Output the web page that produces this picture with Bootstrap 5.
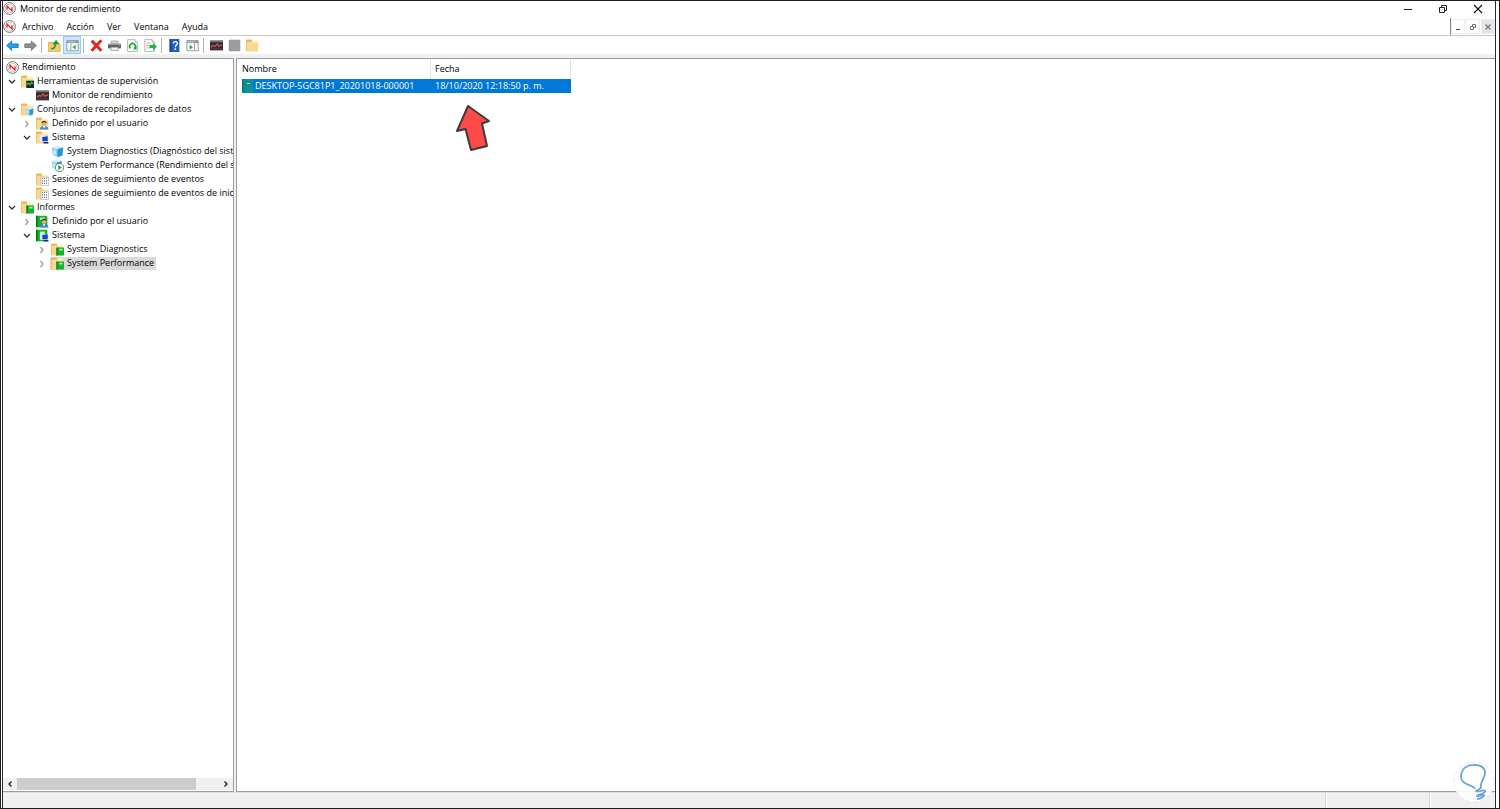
<!DOCTYPE html>
<html lang="es">
<head>
<meta charset="utf-8">
<meta name="viewport" content="width=device-width, initial-scale=1">
<title>Monitor de rendimiento</title>
<link href="https://cdn.jsdelivr.net/npm/bootstrap@5.3.0/dist/css/bootstrap.min.css" rel="stylesheet">
<style>
  body { font: 9px/14px "Open Sans", "Noto Sans", sans-serif; color: #000; background: #fff; }
  a, a:hover { color: inherit; text-decoration: none; }
  button { font: inherit; color: inherit; background: none; border: 0; padding: 0; display: flex; align-items: center; justify-content: center; }
  svg { display: block; flex: none; }
  .window { height: 100vh; min-height: 400px; border: 1px solid #1f1b24; padding: 0 3px 0 1px; }
  .frame { border: solid #2b2730; border-width: 0 1px; }
  .ico { width: 13px; height: 13px; }
  .titlebar { height: 17px; padding-bottom: 2px; }
  .caption-btn { width: 35px; height: 15px; }
  .menubar { height: 18px; border-bottom: 1px solid #c8c8c8; }
  .menubar .menu-link { padding: 0 6px; line-height: 13px; }
  .menubar .menu-link + .menu-link { padding-left: 7px; }
  .mdi { border-left: 1px solid #8c8c8c; gap: 1px; }
  .mdi button { width: 14px; height: 15px; border: 1px solid #ececec; background: #fff; }
  .mdi .shade { background: #e6e6e6; }
  .toolbar { height: 18px; }
  .toolbar button { width: 18px; height: 18px; }
  .toolbar .pressed { background: #cce8ff; border: 1px solid #8fd0f5; }
  .split { width: 6px; height: 18px; padding: 2px 0 1px 2px; }
  .split::before { content: ""; display: block; width: 1px; height: 100%; background: #b4b4b4; }
  .workarea { background: #f0f0f0; padding: 4px 0 0; gap: 2px; }
  .pane { background: #fff; border: 1px solid #9a9da5; }
  .tree-pane { width: 231px; border-left: 0; }
  .tree { padding-top: 1px; }
  .tree ul { list-style: none; margin: 0; padding-left: 15px; }
  .tree > ul { padding-left: 3px; }
  .node { height: 14px; white-space: nowrap; }
  .node .ico { margin-right: 1px; }
  .twist { width: 12px; height: 14px; margin: 0 3px 0 -15px; flex: none; }
  .node a { padding: 0 2px; line-height: 14px; }
  .picked { background: #d9d9d9; height: 13px; margin-left: -1px; padding-left: 1px; }
  .hbar { height: 12px; background: #f0f0f0; margin-bottom: 1px; }
  .hbar button { width: 14px; height: 12px; }
  .thumb { width: 179px; height: 12px; background: #cdcdcd; }
  .list-pane { padding-left: 5px; border-right: 0; }
  .files { width: 329px; table-layout: fixed; border-collapse: separate; border-spacing: 0; }
  .files th { font-weight: 400; height: 20px; padding: 0; border-right: 1px solid #e5e5e5; line-height: 14px; }
  .files th + th, .files td + td { padding-left: 4px; }
  .files td { height: 14px; padding: 0; color: #fff; background: #0078d7; line-height: 14px; }
  .files .c1 { width: 189px; }
  .files a { padding-left: 2px; }
  .statusbar { height: 16px; background: #f0f0f0; border-top: 1px solid #e0e0e0; }
  .statusbar div { border-left: 1px solid #d4d4d4; box-shadow: inset 1px 0 #fff; }
  .part-a { width: 104px; } .part-b { width: 66px; }
  .pointer { position: absolute; left: 217px; top: 45px; }
  .bulb { position: fixed; right: 5px; bottom: 6px; }
</style>
</head>
<body>
<svg class="d-none" aria-hidden="true">
  <symbol id="i-perf" viewBox="0 0 16 16"><circle cx="8" cy="8" r="7.300" fill="#fff" stroke="#66686c" stroke-width="1.100"/><circle cx="8" cy="8" r="5.300" fill="#fff" stroke="#a9a9a9" stroke-width=".8"/><path d="M5 9.500V5l6 6V6.500" fill="none" stroke="#e6231b" stroke-width="1.600"/></symbol>
  <symbol id="i-folder" viewBox="0 0 16 16"><path d="M0 1.500V15h14V3H8L7 .500H1z" fill="#e9b95c"/><path d="M1 3.500H14.500V14.500H1z" fill="#fbdd97"/><path d="M8 1.500h6v3H8z" fill="#fff3cf"/><path d="M1 5.500h14V15H1z" fill="#fad98f"/></symbol>
  <symbol id="i-graph" viewBox="0 0 16 16"><path d="M0 2h16v12H0z" fill="#2b3038"/><path d="M0 2h16v2H0z" fill="#68717c"/><path d="M1 10l3-2 2 1 3-3 2 3 4-2" fill="none" stroke="#f0513c" stroke-width="1.500"/><path d="M1 12h14" stroke="#8b3034"/></symbol>
  <symbol id="i-tools" viewBox="0 0 16 16"><use href="#i-folder"/><path d="M6.500 7H16v9H6.500z" fill="#1d2b25"/><path d="M7 12l2-2 2 2 2-3 2 2" fill="none" stroke="#23d447" stroke-width="1.500"/></symbol>
  <symbol id="i-cube" viewBox="0 0 16 16"><path d="M1 3l7-2 7 2-1 10-6 2-6-3z" fill="#8fd3f5"/><path d="M1 3l7 2 7-2-7-2z" fill="#d9f2ff"/><path d="M8 5l7-2-1 10-6 2z" fill="#2995d3"/><path d="M3 6l3 1v5l-3-1z" fill="#d4efff"/></symbol>
  <symbol id="i-sets" viewBox="0 0 16 16"><use href="#i-folder"/><use href="#i-cube" x="5" y="5" width="11" height="11"/></symbol>
  <symbol id="i-man" viewBox="0 0 16 16"><path d="M1 16c0-5 4-6 7-6s7 1 7 6z" fill="#3a8ad2"/><path d="M6 10l2 4 2-4z" fill="#fff"/><circle cx="8" cy="6" r="4" fill="#dfae84"/><path d="M3.500 6C3 0 13 0 12.500 6 11 3 6 3 3.500 6z" fill="#403229"/></symbol>
  <symbol id="i-userf" viewBox="0 0 16 16"><use href="#i-folder"/><use href="#i-man" x="4" y="3" width="12" height="13"/></symbol>
  <symbol id="i-pc" viewBox="0 0 16 16"><path d="M1 1h6v12H1z" fill="#e6ecf5"/><path d="M4 4h11v9H4z" fill="#eef3fa"/><path d="M5 5l9-1v8H5z" fill="#1146cf"/><path d="M7 13.500h8V16H7z" fill="#18316e"/></symbol>
  <symbol id="i-sysf" viewBox="0 0 16 16"><use href="#i-folder"/><use href="#i-pc" x="4" y="3" width="12" height="13"/></symbol>
  <symbol id="i-cubeplay" viewBox="0 0 16 16"><use href="#i-cube" width="14" height="14"/><circle cx="10.500" cy="10.500" r="5" fill="#fff" stroke="#566" stroke-width="1"/><path d="M9 7.500v6l4.500-3z" fill="#16a52f"/></symbol>
  <symbol id="i-trace" viewBox="0 0 16 16"><use href="#i-folder"/><path d="M6 5h9.500v10.500H6z" fill="#fff" stroke="#aaa" stroke-width=".8"/><path d="M8 6v9M10.500 6v9M13 6v9" stroke="#777" stroke-width="1.300" stroke-dasharray="1.500 1.500"/></symbol>
  <symbol id="i-book" viewBox="0 0 16 16"><path d="M1 1h13l1 1v13H1z" fill="#18b12f"/><path d="M1 1h2v14H1z" fill="#087519"/><path d="M6 3h6v3H6z" fill="#a8efb2"/></symbol>
  <symbol id="i-rep" viewBox="0 0 16 16"><use href="#i-folder"/><use href="#i-book" x="6" y="5" width="11" height="11"/></symbol>
  <symbol id="i-userb" viewBox="0 0 16 16"><use href="#i-book" x="-1"/><use href="#i-man" x="4" y="3" width="12" height="13"/></symbol>
  <symbol id="i-sysb" viewBox="0 0 16 16"><use href="#i-book" x="-1"/><use href="#i-pc" x="4" y="3" width="12" height="13"/></symbol>
  <symbol id="i-open" viewBox="0 0 12 14"><path d="M3 6l3 3 3-3" fill="none" stroke="#333" stroke-width="1.300"/></symbol>
  <symbol id="i-shut" viewBox="0 0 12 14"><path d="M4.500 5L7 8l-2.500 3" fill="none" stroke="#999" stroke-width="1.200"/></symbol>
  <symbol id="i-arrow" viewBox="0 0 16 16"><path d="M.800 8L7 2.500V6h8v4.500H7V14z" stroke-width="1"/></symbol>
  <symbol id="i-pane" viewBox="0 0 16 16"><path d="M1 2h14v12.500H1z" fill="#f7f7f7" stroke="#8c8f94"/><path d="M1 2h14v3H1z" fill="#8d9299"/><path d="M2 3.500h9" stroke="#dde"/></symbol>
  <symbol id="i-sheet" viewBox="0 0 16 16"><path d="M2 .800h9l3 3v11.500H2z" fill="#fff" stroke="#a5a5a5"/><path d="M11 .800v3h3" fill="#eee" stroke="#a5a5a5"/></symbol>
</svg>

<div class="window">
<div class="frame h-100 d-flex flex-column">
  <header class="titlebar d-flex align-items-center flex-shrink-0">
    <svg class="ico"><use href="#i-perf"/></svg>
    <span class="flex-grow-1 ps-1">Monitor de rendimiento</span>
    <button class="caption-btn" type="button" aria-label="Minimizar"><svg width="10" height="10"><path d="M1 5.500h8" stroke="#222"/></svg></button>
    <button class="caption-btn" type="button" aria-label="Restaurar"><svg width="10" height="10" fill="none" stroke="#222"><path d="M1.500 3.500h5v5h-5zM3.500 3V1.500h5v5H7"/></svg></button>
    <button class="caption-btn" type="button" aria-label="Cerrar"><svg width="10" height="10"><path d="M1 1l8 8M9 1L1 9" stroke="#111" stroke-width="1.100"/></svg></button>
  </header>

  <nav class="menubar d-flex align-items-center flex-shrink-0" aria-label="Menú">
    <svg class="ico"><use href="#i-perf"/></svg>
    <a class="menu-link" href="#">Archivo</a><a class="menu-link" href="#">Acción</a><a class="menu-link" href="#">Ver</a><a class="menu-link" href="#">Ventana</a><a class="menu-link" href="#">Ayuda</a>
    <div class="mdi d-flex h-100 ms-auto align-items-center">
      <button type="button" aria-label="Minimizar consola"><svg width="8" height="8"><path d="M2 6.500h4" stroke="#444"/></svg></button>
      <button type="button" aria-label="Restaurar consola"><svg width="8" height="8" fill="none" stroke="#66707a"><path d="M1.500 3.500h3v3h-3zM3.500 3V1.500h3v3H5"/></svg></button>
      <button class="shade" type="button" aria-label="Cerrar consola"><svg width="8" height="8"><path d="M1.500 1.500l5 5M6.500 1.500l-5 5" stroke="#607d90" stroke-width="1.200"/></svg></button>
    </div>
  </nav>

  <div class="toolbar d-flex align-items-center flex-shrink-0" role="toolbar" aria-label="Herramientas">
    <button type="button" aria-label="Atrás"><svg class="ico" fill="#23a5ee" stroke="#0b72bd"><use href="#i-arrow"/></svg></button>
    <button type="button" aria-label="Adelante"><svg class="ico" fill="#8b9095" stroke="#666b70" viewBox="0 0 16 16"><path d="M15.200 8L9 2.500V6H1v4.500h8V14z"/></svg></button>
    <span class="split"></span>
    <button type="button" aria-label="Subir un nivel"><svg class="ico" viewBox="0 0 16 16"><path d="M0 4h6l1 2h8v9.500H0z" fill="#f3c96f" stroke="#d9a441" stroke-width=".8"/><path d="M4 12c4 0 5-2 5-6" fill="none" stroke="#1c9a2d" stroke-width="2"/><path d="M5.500 6.500L10 1l4 5.500z" fill="#1c9a2d"/></svg></button>
    <button class="pressed" type="button" aria-label="Mostrar árbol"><svg class="ico" viewBox="0 0 16 16"><use href="#i-pane"/><path d="M6 5v9" stroke="#8c8f94"/><path d="M12 7v6L8 10z" fill="#1eb53a"/></svg></button>
    <span class="split"></span>
    <button type="button" aria-label="Eliminar"><svg class="ico" viewBox="0 0 16 16"><path d="M2 2l12 12.500M14 1.500L2 14.500" stroke="#e3271c" stroke-width="3.600"/></svg></button>
    <button type="button" aria-label="Imprimir"><svg class="ico" viewBox="0 0 16 16"><path d="M4 2.500h8V6H4z" fill="#d7dade" stroke="#888" stroke-width=".8"/><path d="M0 6h16v5.500H0z" fill="#5b6066"/><path d="M0 6h16v1.500H0z" fill="#91979d"/><path d="M3.500 10h9v4h-9z" fill="#f4f8fb" stroke="#777" stroke-width=".8"/><path d="M13 8.500h2" stroke="#4dd05b"/></svg></button>
    <button type="button" aria-label="Actualizar"><svg class="ico" viewBox="0 0 16 16"><use href="#i-sheet"/><path d="M5.500 11.500a3.500 3.500 0 1 1 5 0" fill="none" stroke="#19ad35" stroke-width="2"/><path d="M8.500 13h4.500V8.500z" fill="#19ad35"/></svg></button>
    <button type="button" aria-label="Exportar lista"><svg class="ico" viewBox="0 0 16 16"><use href="#i-sheet" x="-1"/><path d="M3 5h5M3 8h5M3 11h5" stroke="#999"/><path d="M7 7.500h4V5l5 4.500-5 4.500v-3H7z" fill="#1cb83a"/></svg></button>
    <span class="split"></span>
    <button type="button" aria-label="Ayuda"><svg class="ico" viewBox="0 0 16 16"><path d="M2 0h12v16H2z" fill="#1e5fc0"/><path d="M2 0h2v16H2z" fill="#123e8c"/><path d="M6.500 5.500c0-3 5-3 5 0 0 2-2.500 2-2.500 4.500" fill="none" stroke="#fff" stroke-width="1.700"/><path d="M8 11.500h2v2H8z" fill="#fff"/></svg></button>
    <button type="button" aria-label="Panel de acciones"><svg class="ico" viewBox="0 0 16 16"><use href="#i-pane"/><path d="M10.500 5v9" stroke="#8c8f94"/><path d="M4.500 7v6L8.500 10z" fill="#1eb53a"/></svg></button>
    <span class="split"></span>
    <button type="button" aria-label="Gráfico"><svg class="ico"><use href="#i-graph"/></svg></button>
    <button type="button" aria-label="Detener"><svg class="ico" viewBox="0 0 16 16"><path d="M1.500 1.500h13v13h-13z" fill="#9b9ba3" stroke="#888890"/></svg></button>
    <button type="button" aria-label="Carpeta"><svg class="ico"><use href="#i-folder"/></svg></button>
  </div>

  <main class="workarea d-flex flex-grow-1 overflow-hidden">
    <section class="pane tree-pane d-flex flex-column flex-shrink-0 overflow-hidden">
      <nav class="tree flex-grow-1 overflow-hidden" aria-label="Árbol de consola">
        <ul>
          <li><div class="node d-flex align-items-center"><svg class="ico"><use href="#i-perf"/></svg><a href="#">Rendimiento</a></div>
            <ul>
              <li><div class="node d-flex align-items-center"><button class="twist" type="button" aria-label="Contraer"><svg width="12" height="14"><use href="#i-open"/></svg></button><svg class="ico"><use href="#i-tools"/></svg><a href="#">Herramientas de supervisión</a></div>
                <ul><li class="node d-flex align-items-center"><svg class="ico"><use href="#i-graph"/></svg><a href="#">Monitor de rendimiento</a></li></ul>
              </li>
              <li><div class="node d-flex align-items-center"><button class="twist" type="button" aria-label="Contraer"><svg width="12" height="14"><use href="#i-open"/></svg></button><svg class="ico"><use href="#i-sets"/></svg><a href="#">Conjuntos de recopiladores de datos</a></div>
                <ul>
                  <li class="node d-flex align-items-center"><button class="twist" type="button" aria-label="Expandir"><svg width="12" height="14"><use href="#i-shut"/></svg></button><svg class="ico"><use href="#i-userf"/></svg><a href="#">Definido por el usuario</a></li>
                  <li><div class="node d-flex align-items-center"><button class="twist" type="button" aria-label="Contraer"><svg width="12" height="14"><use href="#i-open"/></svg></button><svg class="ico"><use href="#i-sysf"/></svg><a href="#">Sistema</a></div>
                    <ul>
                      <li class="node d-flex align-items-center"><svg class="ico"><use href="#i-cube"/></svg><a href="#">System Diagnostics (Diagnóstico del siste</a></li>
                      <li class="node d-flex align-items-center"><svg class="ico"><use href="#i-cubeplay"/></svg><a href="#">System Performance (Rendimiento del si</a></li>
                    </ul>
                  </li>
                  <li class="node d-flex align-items-center"><svg class="ico"><use href="#i-trace"/></svg><a href="#">Sesiones de seguimiento de eventos</a></li>
                  <li class="node d-flex align-items-center"><svg class="ico"><use href="#i-trace"/></svg><a href="#">Sesiones de seguimiento de eventos de inici</a></li>
                </ul>
              </li>
              <li><div class="node d-flex align-items-center"><button class="twist" type="button" aria-label="Contraer"><svg width="12" height="14"><use href="#i-open"/></svg></button><svg class="ico"><use href="#i-rep"/></svg><a href="#">Informes</a></div>
                <ul>
                  <li class="node d-flex align-items-center"><button class="twist" type="button" aria-label="Expandir"><svg width="12" height="14"><use href="#i-shut"/></svg></button><svg class="ico"><use href="#i-userb"/></svg><a href="#">Definido por el usuario</a></li>
                  <li><div class="node d-flex align-items-center"><button class="twist" type="button" aria-label="Contraer"><svg width="12" height="14"><use href="#i-open"/></svg></button><svg class="ico"><use href="#i-sysb"/></svg><a href="#">Sistema</a></div>
                    <ul>
                      <li class="node d-flex align-items-center"><button class="twist" type="button" aria-label="Expandir"><svg width="12" height="14"><use href="#i-shut"/></svg></button><svg class="ico"><use href="#i-rep"/></svg><a href="#">System Diagnostics</a></li>
                      <li class="node d-flex align-items-center"><button class="twist" type="button" aria-label="Expandir"><svg width="12" height="14"><use href="#i-shut"/></svg></button><span class="picked d-flex align-items-center"><svg class="ico"><use href="#i-rep"/></svg><a href="#">System Performance</a></span></li>
                    </ul>
                  </li>
                </ul>
              </li>
            </ul>
          </li>
        </ul>
      </nav>
      <div class="hbar d-flex">
        <button type="button" aria-label="Desplazar a la izquierda"><svg width="8" height="8"><path d="M5.500 1.500L3 4l2.500 2.500" fill="none" stroke="#222" stroke-width="1.400"/></svg></button>
        <div class="thumb"></div>
        <button class="ms-auto" type="button" aria-label="Desplazar a la derecha"><svg width="8" height="8"><path d="M2.500 1.500L5 4 2.500 6.500" fill="none" stroke="#222" stroke-width="1.400"/></svg></button>
      </div>
    </section>

    <section class="pane list-pane flex-grow-1 position-relative">
      <table class="files">
        <thead><tr><th class="c1" scope="col">Nombre</th><th scope="col">Fecha</th></tr></thead>
        <tbody><tr>
          <td><div class="d-flex align-items-center"><svg width="11" height="14"><path d="M0 0h11v14H0z" fill="#0d9291"/><path d="M0 0h2v14H0z" fill="#087a80"/><path d="M5 4.500h3" stroke="#9fe0dc"/></svg><a href="#">DESKTOP-5GC81P1_20201018-000001</a></div></td>
          <td>18/10/2020 12:18:50 p. m.</td>
        </tr></tbody>
      </table>
      <svg class="pointer" width="38" height="50" viewBox="0 0 38 50"><path d="M14 2L35 17 28 19.500 33 42 17 46 11.500 25 3 27z" fill="#fe4a49" stroke="#3d3b3b" stroke-width="2" stroke-linejoin="round"/></svg>
    </section>
  </main>

  <footer class="statusbar d-flex justify-content-end flex-shrink-0"><div class="part-a"></div><div class="part-b"></div></footer>
</div>
</div>
<svg class="bulb" width="42" height="42" viewBox="0 0 42 42" aria-hidden="true"><circle cx="21" cy="21" r="20" fill="#fff" fill-opacity=".9" stroke="#e3e3f0" stroke-dasharray="4 3"/><path d="M22 28C20 23 9 25 8 16 8 8 14 3 22 4c8 0 12 5 9 12-2 4-4 8-3 11l-5 3c1 2 7-2 9 0s-9 4-8 5c2 1 6-2 7-1s-3 4-7 4" fill="none" stroke="#6fa5cf" stroke-width="1.800" stroke-linejoin="round"/></svg>
<script src="https://cdn.jsdelivr.net/npm/bootstrap@5.3.0/dist/js/bootstrap.bundle.min.js"></script>
</body>
</html>
